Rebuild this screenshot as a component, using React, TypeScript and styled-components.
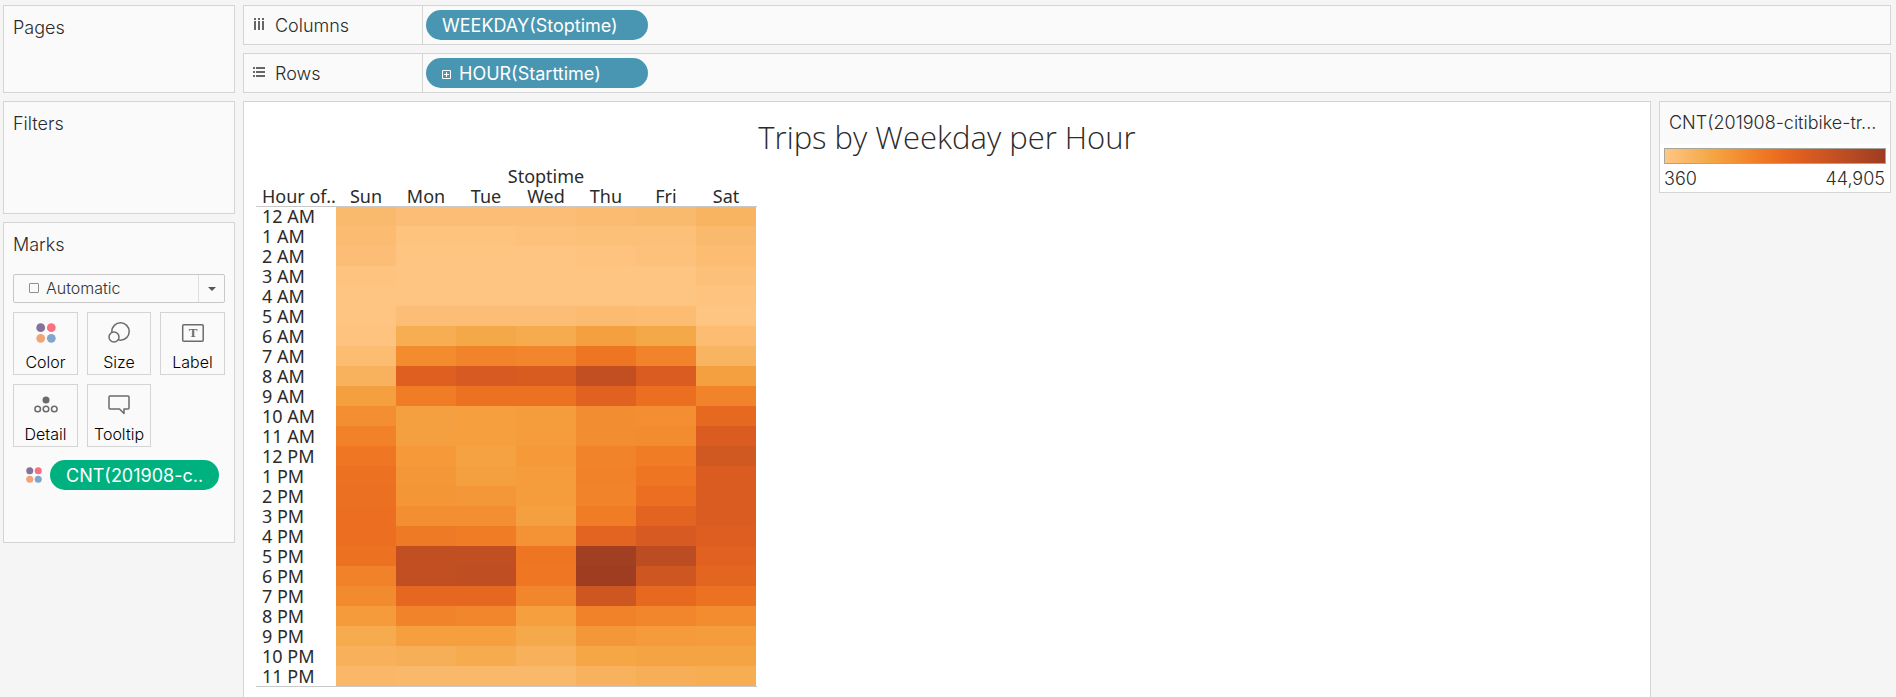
import React from 'react';
import styled, { createGlobalStyle } from 'styled-components';

const GlobalStyle = createGlobalStyle`
  *, *::before, *::after { box-sizing: border-box; }
  body {
    margin: 0;
    background: #f5f5f5;
    color: #2b2b2b;
    font-family: Inter, "Open Sans", sans-serif;
    font-size: 18px;
    font-weight: 300;
    line-height: 20px;
    overflow: hidden;
  }
`;

const Workspace = styled.div`
  display: grid;
  grid-template-columns: 232px minmax(0, 1fr);
  gap: 8px;
  min-height: 100vh;
  padding: 5px 5px 0 3px;
`;

const Sidebar = styled.aside`
  display: flex;
  flex-direction: column;
  gap: 8px;
`;

const Card = styled.section<{ $height: number }>`
  min-height: ${(p) => p.$height}px;
  padding: 12px 9px 0;
  border: 1px solid #d4d4d4;
  background: #fafafa;
`;

const CardTitle = styled.h2`
  margin: 0;
  font: inherit;
`;

const MarkType = styled.div`
  position: relative;
  margin-top: 19px;
  color: #666;
`;

const MarkSelect = styled.select`
  display: block;
  width: 100%;
  height: 29px;
  padding: 0 32px 2px 32px;
  appearance: none;
  border: 1px solid #c8c8c8;
  border-radius: 2px;
  background: #fafafa;
  color: #333;
  font: inherit;
  font-size: 16px;
`;

const SquareGlyph = styled.span`
  position: absolute;
  top: 9px;
  left: 16px;
  width: 10px;
  height: 10px;
  border: 1px solid #8f8f8f;
  border-radius: 1px;
  pointer-events: none;
`;

const Arrow = styled.span`
  position: absolute;
  top: 1px;
  right: 1px;
  bottom: 1px;
  display: grid;
  place-items: center;
  width: 26px;
  border-left: 1px solid #dedede;
  pointer-events: none;
`;

const MarkGrid = styled.div`
  display: grid;
  grid-template-columns: 65px 64px 65px;
  gap: 9px;
  margin-top: 9px;
`;

const MarkButton = styled.button`
  display: flex;
  flex-direction: column;
  align-items: center;
  justify-content: space-between;
  height: 63px;
  padding: 8px 0 2px;
  border: 1px solid #d4d4d4;
  background: #fafafa;
  color: #000;
  font: inherit;
  font-size: 16px;
`;

const MarkPillRow = styled.div`
  display: flex;
  align-items: center;
  gap: 8px;
  margin-top: 13px;
  padding: 0 6px 0 13px;

  svg { flex: none; }
`;

const Pill = styled.button<{ $tone: 'dimension' | 'measure'; $width?: number }>`
  display: flex;
  align-items: center;
  gap: 8px;
  flex: ${(p) => (p.$width ? 'none' : '1')};
  width: ${(p) => (p.$width ? `${p.$width}px` : 'auto')};
  height: 30px;
  padding: 2px 16px 0;
  border: 0;
  border-radius: 15px;
  background: ${(p) => (p.$tone === 'measure' ? '#00b180' : '#4996b2')};
  color: #fff;
  font: inherit;
  font-weight: 400;
  white-space: nowrap;
`;

const Main = styled.main`
  display: flex;
  flex-direction: column;
  gap: 8px;
  min-width: 0;
`;

const Shelf = styled.section`
  display: flex;
  height: 40px;
  border: 1px solid #d4d4d4;
  background: #fafafa;
`;

const ShelfLabel = styled.h2`
  display: flex;
  align-items: center;
  gap: 10px;
  width: 179px;
  margin: 0;
  padding: 2px 0 0 9px;
  border-right: 1px solid #d4d4d4;
  font: inherit;

  svg { margin-bottom: 4px; }
`;

const ShelfFields = styled.div`
  display: flex;
  align-items: center;
  padding-left: 3px;
`;

const ViewArea = styled.div`
  display: grid;
  grid-template-columns: minmax(0, 1fr) 232px;
  align-items: start;
  flex: 1;
  gap: 8px;
`;

const Sheet = styled.section`
  align-self: stretch;
  padding: 15px 12px 0;
  border: 1px solid #d4d4d4;
  border-bottom: 0;
  background: #fff;
`;

const SheetTitle = styled.h1`
  margin: 0 0 9px;
  font-family: "Open Sans", sans-serif;
  font-size: 31px;
  font-weight: 300;
  line-height: 40px;
  text-align: center;
`;

const HeatTable = styled.table`
  width: 501px;
  table-layout: fixed;
  border-collapse: separate;
  border-spacing: 0;
  border-bottom: 1px solid #c8c8c8;
  font-family: "Noto Sans", sans-serif;

  th, td { height: 20px; padding: 0; font-weight: 400; line-height: 19px; }
  tbody tr:first-child > * { border-top: 1px solid #c8c8c8; }
`;

const LabelCol = styled.col`
  width: 80px;
`;

const DayCol = styled.col`
  width: 60px;
`;

const EndCol = styled.col`
  width: 1px;
`;

const DayHead = styled.th`
  text-align: center;
`;

const HourHead = styled.th`
  && {
    padding-left: 6px;
    text-align: left;
    white-space: nowrap;
  }
`;

const Cell = styled.td<{ $color: string }>`
  background: ${(p) => p.$color};
`;

const Legend = styled.section`
  border: 1px solid #d4d4d4;
  background: #fff;
`;

const LegendTitle = styled.h2`
  margin: 0;
  padding: 11px 8px 11px 9px;
  overflow: hidden;
  background: #fafafa;
  font: inherit;
  white-space: nowrap;
`;

const Ramp = styled.div<{ $stops: string }>`
  height: 16px;
  margin: 4px 4px 0;
  border: 1px solid #a8a59a;
  background: linear-gradient(to right, ${(p) => p.$stops});
`;

const LegendRange = styled.div`
  display: flex;
  justify-content: space-between;
  padding: 5px 5px 3px 4px;
`;

const palette = [
  'ffc685', 'fcbe75', 'f9b665', 'f7ae54', 'f5a645', 'f59c3c', 'f49234',
  'f2882d', 'f07e27', 'ee7422', 'e96b20', 'e36420', 'db5c20', 'd25921',
  'ca5422', 'c14f22', 'b84b23', 'af4623', 'a64122', '9e3d22',
];

const channels = (hex: string) =>
  [0, 2, 4].map((i) => parseInt(hex.slice(i, i + 2), 16));

function shade(percent: number) {
  const at = (percent / 100) * (palette.length - 1);
  const low = Math.min(Math.floor(at), palette.length - 2);
  const from = channels(palette[low]);
  const to = channels(palette[low + 1]);
  return `rgb(${from.map((c, i) => Math.round(c + (to[i] - c) * (at - low))).join(',')})`;
}

const days = ['Sun', 'Mon', 'Tue', 'Wed', 'Thu', 'Fri', 'Sat'];

// Trip volume per hour, Sunday to Saturday, as a percentage of the legend's range.
const hours: [string, number[]][] = [
  ['12 AM', [8, 5, 5, 5, 7, 8, 12]],
  ['1 AM', [7, 2, 2, 3, 4, 4, 8]],
  ['2 AM', [5, 1, 1, 1, 2, 3, 6]],
  ['3 AM', [2, 1, 1, 1, 1, 1, 4]],
  ['4 AM', [1, 1, 1, 1, 1, 1, 2]],
  ['5 AM', [1, 5, 5, 5, 7, 6, 1]],
  ['6 AM', [2, 16, 20, 18, 24, 20, 6]],
  ['7 AM', [6, 35, 39, 38, 47, 39, 12]],
  ['8 AM', [13, 61, 66, 65, 79, 63, 24]],
  ['9 AM', [24, 43, 49, 49, 59, 51, 39]],
  ['10 AM', [33, 24, 25, 26, 34, 33, 54]],
  ['11 AM', [40, 24, 25, 26, 34, 35, 64]],
  ['12 PM', [46, 28, 23, 28, 39, 43, 70]],
  ['1 PM', [49, 29, 24, 26, 40, 47, 63]],
  ['2 PM', [50, 30, 29, 26, 39, 51, 63]],
  ['3 PM', [51, 33, 33, 24, 43, 58, 63]],
  ['4 PM', [51, 44, 43, 31, 58, 66, 62]],
  ['5 PM', [49, 79, 79, 47, 98, 82, 60]],
  ['6 PM', [40, 79, 80, 46, 100, 71, 57]],
  ['7 PM', [36, 56, 56, 38, 71, 54, 49]],
  ['8 PM', [27, 39, 38, 25, 40, 38, 35]],
  ['9 PM', [18, 25, 25, 19, 29, 27, 26]],
  ['10 PM', [14, 15, 18, 14, 21, 22, 22]],
  ['11 PM', [10, 9, 9, 9, 13, 15, 16]],
];

function ColumnsIcon() {
  return (
    <svg width="12" height="12" viewBox="0 0 12 12" fill="#666" aria-hidden="true">
      {[1, 5, 9].map((x) => (
        <g key={x}>
          <rect x={x} y="0" width="2" height="2" />
          <rect x={x} y="3" width="2" height="9" />
        </g>
      ))}
    </svg>
  );
}

function RowsIcon() {
  return (
    <svg width="12" height="12" viewBox="0 0 12 12" fill="#666" aria-hidden="true">
      {[1, 5, 9].map((y) => (
        <g key={y}>
          <rect x="0" y={y} width="2" height="2" />
          <rect x="3" y={y} width="9" height="2" />
        </g>
      ))}
    </svg>
  );
}

function ExpandIcon() {
  return (
    <svg width="9" height="9" viewBox="0 0 9 9" fill="none" stroke="#fff" aria-hidden="true">
      <path d="M.5.5h8v8h-8zM4.500 2v5M2 4.500h5" />
    </svg>
  );
}

function ColorIcon({ size }: { size: number }) {
  return (
    <svg width={size} height={size} viewBox="0 0 20 20" aria-hidden="true">
      <circle cx="4.700" cy="4.700" r="4.400" fill="#86719a" />
      <circle cx="15.300" cy="4.700" r="4.400" fill="#f9707f" />
      <circle cx="4.700" cy="15.300" r="4.400" fill="#f2a479" />
      <circle cx="15.300" cy="15.300" r="4.400" fill="#82a5cc" />
    </svg>
  );
}

function SizeIcon() {
  return (
    <svg width="24" height="24" viewBox="0 0 24 24" fill="#fafafa" stroke="#6b6b6b" strokeWidth="1.500" aria-hidden="true">
      <circle cx="13.500" cy="10.500" r="8.700" />
      <circle cx="7" cy="16" r="5" />
    </svg>
  );
}

function LabelIcon() {
  return (
    <svg width="24" height="24" viewBox="0 0 24 24" fill="none" stroke="#6b6b6b" strokeWidth="1.500" aria-hidden="true">
      <rect x="1.700" y="3.700" width="20.500" height="16.500" rx="1" />
      <text x="12" y="16" textAnchor="middle" fill="#6b6b6b" stroke="none" fontFamily="Liberation Serif, serif" fontSize="13" fontWeight="700">T</text>
    </svg>
  );
}

function DetailIcon() {
  return (
    <svg width="24" height="24" viewBox="0 0 24 24" fill="none" stroke="#6b6b6b" strokeWidth="1.500" aria-hidden="true">
      <circle cx="12" cy="7" r="3.500" fill="#6b6b6b" stroke="none" />
      <circle cx="3.700" cy="16" r="2.800" />
      <circle cx="12" cy="16" r="2.800" />
      <circle cx="20.300" cy="16" r="2.800" />
    </svg>
  );
}

function TooltipIcon() {
  return (
    <svg width="24" height="24" viewBox="0 0 24 24" fill="none" stroke="#6b6b6b" strokeWidth="1.500" strokeLinejoin="round" aria-hidden="true">
      <path d="M3 3h18q1 0 1 1v11q0 1-1 1h-4v4.500L12.500 16H3q-1 0-1-1V4q0-1 1-1z" />
    </svg>
  );
}

const IconBox = styled.span`
  display: grid;
  place-items: center;
  width: 24px;
  height: 24px;
`;

const markButtons: [string, React.ReactNode][] = [
  ['Color', <ColorIcon size={20} />],
  ['Size', <SizeIcon />],
  ['Label', <LabelIcon />],
  ['Detail', <DetailIcon />],
  ['Tooltip', <TooltipIcon />],
];

export default function App() {
  return (
    <>
      <GlobalStyle />
      <Workspace>
        <Sidebar>
          <Card $height={88}><CardTitle>Pages</CardTitle></Card>
          <Card $height={113}><CardTitle>Filters</CardTitle></Card>
          <Card $height={321}>
            <CardTitle>Marks</CardTitle>
            <MarkType>
              <MarkSelect aria-label="Mark type" defaultValue="Automatic">
                <option>Automatic</option>
              </MarkSelect>
              <SquareGlyph />
              <Arrow>
                <svg width="8" height="4" viewBox="0 0 8 4" fill="#555" aria-hidden="true">
                  <path d="M0 0h8L4 4z" />
                </svg>
              </Arrow>
            </MarkType>
            <MarkGrid>
              {markButtons.map(([name, icon]) => (
                <MarkButton key={name} type="button">
                  <IconBox>{icon}</IconBox>
                  {name}
                </MarkButton>
              ))}
            </MarkGrid>
            <MarkPillRow>
              <ColorIcon size={16} />
              <Pill type="button" $tone="measure">CNT(201908-c..</Pill>
            </MarkPillRow>
          </Card>
        </Sidebar>
        <Main>
          <Shelf>
            <ShelfLabel><ColumnsIcon />Columns</ShelfLabel>
            <ShelfFields>
              <Pill type="button" $tone="dimension" $width={222}>WEEKDAY(Stoptime)</Pill>
            </ShelfFields>
          </Shelf>
          <Shelf>
            <ShelfLabel><RowsIcon />Rows</ShelfLabel>
            <ShelfFields>
              <Pill type="button" $tone="dimension" $width={222}><ExpandIcon />HOUR(Starttime)</Pill>
            </ShelfFields>
          </Shelf>
          <ViewArea>
            <Sheet>
              <SheetTitle>Trips by Weekday per Hour</SheetTitle>
              <HeatTable>
                <colgroup>
                  <LabelCol />
                  {days.map((day) => <DayCol key={day} />)}
                  <EndCol />
                </colgroup>
                <thead>
                  <tr>
                    <td />
                    <th colSpan={7} scope="colgroup">Stoptime</th>
                    <td />
                  </tr>
                  <tr>
                    <HourHead scope="col">Hour of..</HourHead>
                    {days.map((day) => <DayHead key={day} scope="col">{day}</DayHead>)}
                    <td />
                  </tr>
                </thead>
                <tbody>
                  {hours.map(([hour, values]) => (
                    <tr key={hour}>
                      <HourHead scope="row">{hour}</HourHead>
                      {values.map((value, i) => <Cell key={days[i]} $color={shade(value)} />)}
                      <td />
                    </tr>
                  ))}
                </tbody>
              </HeatTable>
            </Sheet>
            <Legend>
              <LegendTitle>CNT(201908-citibike-tr...</LegendTitle>
              <Ramp $stops={palette.map((hex) => `#${hex}`).join(', ')} />
              <LegendRange><span>360</span><span>44,905</span></LegendRange>
            </Legend>
          </ViewArea>
        </Main>
      </Workspace>
    </>
  );
}
